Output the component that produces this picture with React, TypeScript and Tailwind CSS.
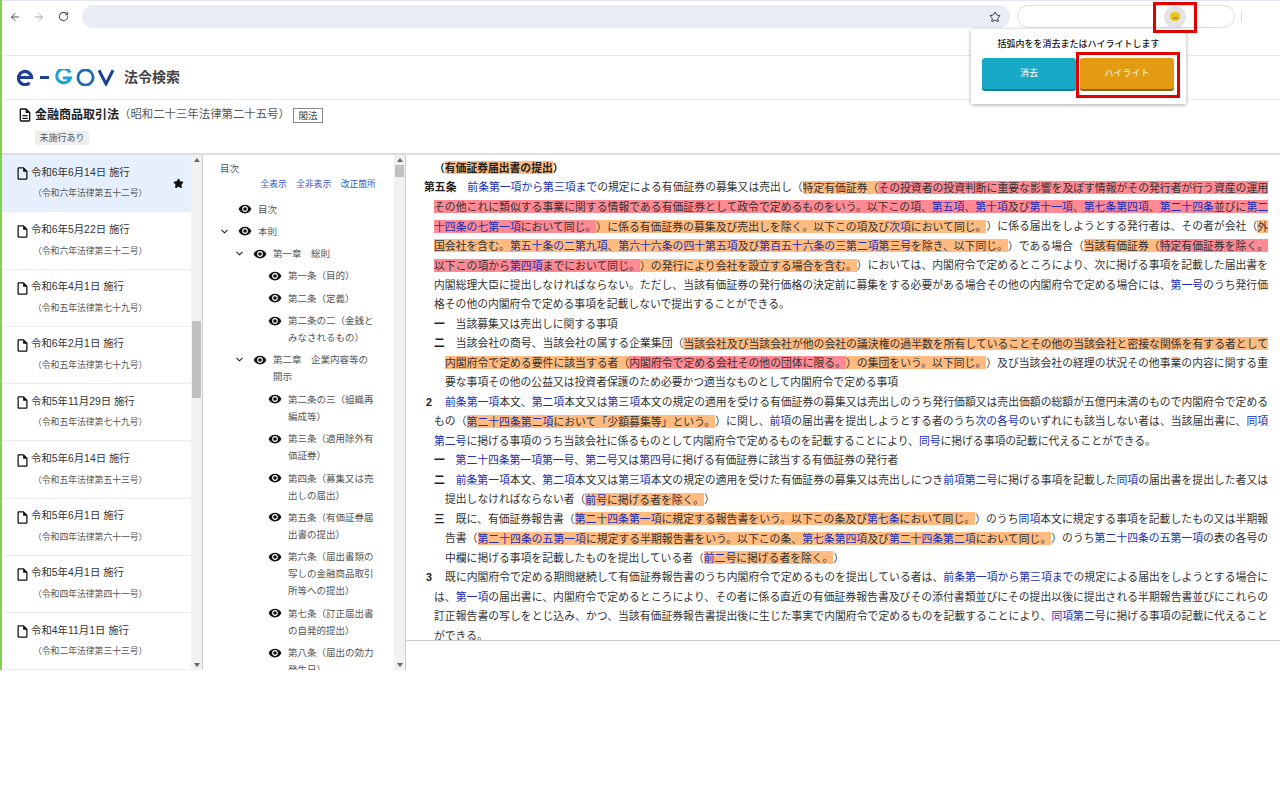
import React from "react";
import { ArrowLeft, ArrowRight, RotateCw, Star, ChevronDown } from "lucide-react";

type P = { children?: React.ReactNode };
const O = ({ children }: P) => <span className="bg-[#ffbb80] py-[0.5px]">{children}</span>;
const R = ({ children }: P) => <span className="bg-[#ff8a94] py-[0.5px]">{children}</span>;
const L = ({ children }: P) => <span className="text-[#2030b8]">{children}</span>;

function Line({ indent = 0, j = false, children }: P & { indent?: 0 | 1 | 2; j?: boolean }) {
  const ind = indent === 2 ? "ml-[21px]" : indent === 1 ? "ml-[10px]" : "";
  return (
    <div className={`h-[19.5px] leading-[19.5px] overflow-hidden ${ind} ${j ? "text-justify [text-align-last:justify]" : ""}`}>
      {children}
    </div>
  );
}

const FileIcon = ({ className }: { className: string }) => (
  <svg viewBox="0 0 24 24" fill="currentColor" className={className}>
    <path d="M14 2H6c-1.1 0-1.99.9-1.99 2L4 20c0 1.1.89 2 1.99 2H18c1.1 0 2-.9 2-2V8l-6-6zM6 20V4h7v5h5v11H6z" />
  </svg>
);
const DocIcon = ({ className }: { className: string }) => (
  <svg viewBox="0 0 24 24" fill="currentColor" className={className}>
    <path d="M8 16h8v2H8zm0-4h8v2H8zm6-10H6c-1.1 0-2 .9-2 2v16c0 1.1.89 2 1.99 2H18c1.1 0 2-.9 2-2V8l-6-6zm4 18H6V4h7v5h5v11z" />
  </svg>
);
const Eye = () => (
  <svg viewBox="0 0 24 24" fill="currentColor" className="w-[14px] h-[14px] shrink-0 -ml-[0.5px] mr-[6.5px] mt-[1.5px] text-[#111]">
    <path d="M12 4.5C7 4.5 2.73 7.61 1 12c1.73 4.39 6 7.5 11 7.5s9.27-3.11 11-7.5c-1.73-4.39-6-7.5-11-7.5zM12 17c-2.76 0-5-2.24-5-5s2.24-5 5-5 5 2.24 5 5-2.24 5-5 5zm0-8c-1.66 0-3 1.34-3 3s1.34 3 3 3 3-1.34 3-3-1.34-3-3-3z" />
  </svg>
);

const laws: [string, string][] = [
  ["令和6年6月14日 施行", "（令和六年法律第五十二号）"],
  ["令和6年5月22日 施行", "（令和六年法律第三十二号）"],
  ["令和6年4月1日 施行", "（令和五年法律第七十九号）"],
  ["令和6年2月1日 施行", "（令和五年法律第七十九号）"],
  ["令和5年11月29日 施行", "（令和五年法律第七十九号）"],
  ["令和5年6月14日 施行", "（令和五年法律第五十三号）"],
  ["令和5年6月1日 施行", "（令和四年法律第六十一号）"],
  ["令和5年4月1日 施行", "（令和四年法律第四十一号）"],
  ["令和4年11月1日 施行", "（令和二年法律第三十三号）"],
];

const toc: { level: 0 | 1 | 2; chev?: boolean; text: string }[] = [
  { level: 0, text: "目次" },
  { level: 0, chev: true, text: "本則" },
  { level: 1, chev: true, text: "第一章　総則" },
  { level: 2, text: "第一条（目的）" },
  { level: 2, text: "第二条（定義）" },
  { level: 2, text: "第二条の二（金銭とみなされるもの）" },
  { level: 1, chev: true, text: "第二章　企業内容等の開示" },
  { level: 2, text: "第二条の三（組織再編成等）" },
  { level: 2, text: "第三条（適用除外有価証券）" },
  { level: 2, text: "第四条（募集又は売出しの届出）" },
  { level: 2, text: "第五条（有価証券届出書の提出）" },
  { level: 2, text: "第六条（届出書類の写しの金融商品取引所等への提出）" },
  { level: 2, text: "第七条（訂正届出書の自発的提出）" },
  { level: 2, text: "第八条（届出の効力発生日）" },
];

function ScrollBar({ offset }: { offset: string }) {
  return (
    <div className="w-[11px] shrink-0 bg-[#f1f1f1] flex flex-col items-center h-full relative">
      <div className="mt-[3px] w-0 h-0 border-x-[3px] border-x-transparent border-b-[4px] border-b-[#666]" />
      <div className={`w-[9px] bg-[#c1c1c1] ${offset}`} />
      <div className="mt-auto mb-[3px] w-0 h-0 border-x-[3px] border-x-transparent border-t-[4px] border-t-[#666]" />
    </div>
  );
}

export default function App() {
  return (
    <div lang="ja" className="relative w-[1280px] h-[800px] bg-white overflow-hidden text-[#333] [text-spacing-trim:space-all] font-['Liberation_Sans','Noto_Sans_CJK_JP',sans-serif]">
      <div className="h-[670px] border-l-2 border-[#82d24f] flex flex-col">
        {/* browser toolbar */}
        <div className="h-px bg-[#e2e6f6]" />
        <div className="h-[55px] border-b border-[#e8e8e8] flex items-start pt-[4px] shrink-0">
          <div className="w-[1px]" />
          <div className="w-[24px] h-[23px] flex items-center justify-center text-[#555]"><ArrowLeft size={12} strokeWidth={2} /></div>
          <div className="w-[24px] h-[23px] flex items-center justify-center text-[#aaa]"><ArrowRight size={12} strokeWidth={2} /></div>
          <div className="w-[24px] h-[23px] flex items-center justify-center text-[#555]"><RotateCw size={11} strokeWidth={2.2} /></div>
          <div className="ml-[7px] w-[928px] h-[23px] rounded-full bg-[#e9eef6] flex items-center justify-end pr-[9px] text-[#333]">
            <Star size={12} strokeWidth={2} />
          </div>
          <div className="ml-[7px] w-[218px] h-[23px] rounded-full border border-[#dcdcdc] bg-white flex items-center justify-end pr-[48px]">
            <div className="w-[22px] h-[22px] rounded-full bg-[#e3e3e3] flex items-center justify-center">
              <div className="w-[10px] h-[9px] rounded-full bg-[#edc21f] flex items-center justify-center">
                <div className="w-[5px] h-[2px] mt-[2px] rounded-full bg-[#b8982f]" />
              </div>
            </div>
          </div>
          <div className="ml-[6px] mt-[7px] w-px h-[10px] bg-[#dcdcdc]" />
        </div>

        {/* site header */}
        <div className="h-[44px] shrink-0 border-b border-[#ececec] flex items-center pl-[15px] pb-[1px]">
          <svg viewBox="0 0 97 17" className="w-[97px] h-[17px]" fill="none">
            <path d="M1.8 8.5H14.6A6.6 6.6 0 1 0 12.6 13.8" stroke="#1c3f94" strokeWidth="3.2" />
            <path d="M23 8.5H32" stroke="#1c3f94" strokeWidth="3" />
            <path d="M53 3.6A7 7 0 1 0 53.4 9H46" stroke="#1ea0d8" strokeWidth="3" />
            <circle cx="68.5" cy="8.5" r="7.6" stroke="#1f6ab5" strokeWidth="2.8" />
            <path d="M82 1.2L89 15L96 1.2" stroke="#1c3f94" strokeWidth="3" />
          </svg>
          <span className="ml-[10px] text-[14px] font-bold leading-none text-[#444]">法令検索</span>
        </div>

        {/* title */}
        <div className="h-[53px] shrink-0 pl-[15px] pt-[7px]">
          <div className="flex items-center h-[16px]">
            <DocIcon className="w-[16px] h-[16px] text-[#111] shrink-0" />
            <span className="ml-[2px] text-[12px] font-bold text-[#222]">金融商品取引法</span>
            <span className="text-[11.4px] text-[#555]">（昭和二十三年法律第二十五号）</span>
            <span className="ml-[3px] w-[30px] h-[15px] border border-[#888] text-[9.5px] leading-[13px] text-center text-[#444]">閣法</span>
          </div>
          <div className="ml-[18px] mt-[8px] w-[54px] h-[14px] bg-[#eeeeee] text-[9px] leading-[14px] text-center text-[#555] rounded-[1px]">未施行あり</div>
        </div>

        {/* content */}
        <div className="flex-1 min-h-0 flex border-t-2 border-[#dddddd]">
          <div className="w-[189px] shrink-0 overflow-hidden">
            {laws.map(([a, b], i) => (
              <div key={i} className={`h-[57.25px] border-b border-[#ececec] flex items-center pr-[7px] ${i === 0 ? "bg-[#e6f0fc]" : ""}`}>
                <div className="flex-1 pl-[13px] -mt-[0.5px]">
                  <div className="flex items-center h-[18px] text-[10.4px] text-[#333]">
                    <FileIcon className="w-[15px] h-[15px] mt-[3px] shrink-0 text-[#111]" />
                    <span className="ml-[1px]">{a}</span>
                  </div>
                  <div className="mt-[4px] ml-[18px] h-[17px] leading-[17px] text-[8.8px] text-[#555] whitespace-nowrap">{b}</div>
                </div>
                {i === 0 && <Star size={11} fill="#111" stroke="#111" />}
              </div>
            ))}
          </div>
          <ScrollBar offset="mt-[159px] h-[77px]" />
          <div className="w-px bg-[#cccccc] shrink-0" />
          <div className="w-[191px] shrink-0 overflow-hidden text-[9.5px] text-[#555]">
            <div className="pl-[17px] pt-[5px] h-[22px] leading-[17px]">目次</div>
            <div className="-mt-px h-[17px] leading-[17px] flex gap-[9.5px] pl-[57.5px] text-[8.75px] text-[#3a55c4]">
              <span>全表示</span><span>全非表示</span><span>改正箇所</span>
            </div>
            <div className="pt-[5px] pl-[16px] pr-[18px]">
              {toc.map((t, i) => (
                <div key={i} className="flex items-start py-[2.6px] leading-[17.1px]">
                  {t.level === 1 && <div className="w-[15px] shrink-0" />}
                  {t.level === 2 && <div className="w-[30px] shrink-0" />}
                  <div className="w-[19px] shrink-0 pt-[3px]">
                    {t.chev && <ChevronDown size={11} strokeWidth={2.2} className="text-[#222]" />}
                  </div>
                  <Eye />
                  <span className="min-w-0">{t.text}</span>
                </div>
              ))}
            </div>
          </div>
          <ScrollBar offset="mt-[3px] h-[12px]" />
          <div className="w-px bg-[#cccccc] shrink-0" />

          {/* law text */}
          <div className="flex-1 min-w-0">
            <div className="h-[486px] border-b border-[#cccccc] overflow-hidden pl-[18px] pr-[12px] pt-[3.5px] text-[10.8px] text-[#333]">
              <Line indent={1}><b className="text-[#222]">（<O>有価証券届出書の提出</O>）</b></Line>
              <Line j><b className="text-[#222]">第五条</b>　<L>前条第一項から第三項まで</L>の規定による有価証券の募集又は売出し（<O>特定有価証券（</O><R>その投資者の投資判断に重要な影響を及ぼす情報がその発行者が行う資産の運用</R></Line>
              <Line indent={1} j><R>その他これに類似する事業に関する情報である有価証券として政令で定めるものをいう。以下この項、<L>第五項</L>、<L>第十項</L>及び<L>第十一項</L>、<L>第七条第四項</L>、<L>第二十四条</L>並びに<L>第二</L></R></Line>
              <Line indent={1} j><R><L>十四条の七第一項</L>において同じ。</R><O>）に係る有価証券の募集及び売出しを除く。以下この項及び<L>次項</L>において同じ。</O>）に係る届出をしようとする発行者は、その者が会社（<O>外</O></Line>
              <Line indent={1} j><O>国会社を含む。<L>第五十条の二第九項</L>、<L>第六十六条の四十第五項</L>及び<L>第百五十六条の三第二項第三号</L>を除き、以下同じ。</O>）である場合（<O>当該有価証券（</O><R>特定有価証券を除く。</R></Line>
              <Line indent={1} j><R>以下この項から<L>第四項</L>までにおいて同じ。</R><O>）の発行により会社を設立する場合を含む。</O>）においては、内閣府令で定めるところにより、次に掲げる事項を記載した届出書を</Line>
              <Line indent={1} j>内閣総理大臣に提出しなければならない。ただし、当該有価証券の発行価格の決定前に募集をする必要がある場合その他の内閣府令で定める場合には、<L>第一号</L>のうち発行価</Line>
              <Line indent={1}>格その他の内閣府令で定める事項を記載しないで提出することができる。</Line>
              <Line indent={1}><b className="text-[#222]">一</b>　当該募集又は売出しに関する事項</Line>
              <Line indent={1} j><b className="text-[#222]">二</b>　当該会社の商号、当該会社の属する企業集団（<O>当該会社及び当該会社が他の会社の議決権の過半数を所有していることその他の当該会社と密接な関係を有する者として</O></Line>
              <Line indent={2} j><O>内閣府令で定める要件に該当する者（</O><R>内閣府令で定める会社その他の団体に限る。</R><O>）の集団をいう。以下同じ。</O>）及び当該会社の経理の状況その他事業の内容に関する重</Line>
              <Line indent={2}>要な事項その他の公益又は投資者保護のため必要かつ適当なものとして内閣府令で定める事項</Line>
              <Line j><b className="inline-block w-[21px] pl-[2px] text-[#222]">2</b><L>前条第一項</L>本文、<L>第二項</L>本文又は<L>第三項</L>本文の規定の適用を受ける有価証券の募集又は売出しのうち発行価額又は売出価額の総額が五億円未満のもので内閣府令で定める</Line>
              <Line indent={1} j>もの（<O><L>第二十四条第二項</L>において「少額募集等」という。</O>）に関し、<L>前項</L>の届出書を提出しようとする者のうち<L>次の各号</L>のいずれにも該当しない者は、当該届出書に、<L>同項</L></Line>
              <Line indent={1}><L>第二号</L>に掲げる事項のうち当該会社に係るものとして内閣府令で定めるものを記載することにより、<L>同号</L>に掲げる事項の記載に代えることができる。</Line>
              <Line indent={1}><b className="text-[#222]">一</b>　<L>第二十四条第一項第一号</L>、<L>第二号</L>又は<L>第四号</L>に掲げる有価証券に該当する有価証券の発行者</Line>
              <Line indent={1} j><b className="text-[#222]">二</b>　<L>前条第一項</L>本文、<L>第二項</L>本文又は<L>第三項</L>本文の規定の適用を受けた有価証券の募集又は売出しにつき<L>前項第二号</L>に掲げる事項を記載した<L>同項</L>の届出書を提出した者又は</Line>
              <Line indent={2}>提出しなければならない者（<O><L>前号</L>に掲げる者を除く。</O>）</Line>
              <Line indent={1} j><b className="text-[#222]">三</b>　既に、有価証券報告書（<O><L>第二十四条第一項</L>に規定する報告書をいう。以下この条及び<L>第七条</L>において同じ。</O>）のうち<L>同項</L>本文に規定する事項を記載したもの又は半期報</Line>
              <Line indent={2} j>告書（<O><L>第二十四条の五第一項</L>に規定する半期報告書をいう。以下この条、<L>第七条第四項</L>及び<L>第二十四条第二項</L>において同じ。</O>）のうち<L>第二十四条の五第一項</L>の表の各号の</Line>
              <Line indent={2}>中欄に掲げる事項を記載したものを提出している者（<O><L>前二号</L>に掲げる者を除く。</O>）</Line>
              <Line j><b className="inline-block w-[21px] pl-[2px] text-[#222]">3</b>既に内閣府令で定める期間継続して有価証券報告書のうち内閣府令で定めるものを提出している者は、<L>前条第一項から第三項まで</L>の規定による届出をしようとする場合に</Line>
              <Line indent={1} j>は、<L>第一項</L>の届出書に、内閣府令で定めるところにより、その者に係る直近の有価証券報告書及びその添付書類並びにその提出以後に提出される半期報告書並びにこれらの</Line>
              <Line indent={1} j>訂正報告書の写しをとじ込み、かつ、当該有価証券報告書提出後に生じた事実で内閣府令で定めるものを記載することにより、<L>同項第二号</L>に掲げる事項の記載に代えること</Line>
              <Line indent={1}>ができる。</Line>
            </div>
          </div>
        </div>
      </div>

      {/* extension popup */}
      <div className="absolute left-[971px] top-[29px] w-[215px] h-[75px] bg-white shadow-[0_1px_4px_rgba(0,0,0,0.35)] flex flex-col">
        <div className="h-[29px] pt-[6px] leading-[18px] text-center text-[9px] font-medium text-[#111]">括弧内をを消去またはハイライトします</div>
        <div className="flex gap-[4px] pl-[11px]">
          <div className="w-[94px] h-[33px] rounded-[3px] bg-[#17a9c6] border-b-2 border-[#0f7f96] text-white text-[9px] flex items-center justify-center">消去</div>
          <div className="w-[94px] h-[33px] rounded-[3px] bg-[#e39b13] border-b-2 border-[#8f6410] text-white text-[9px] flex items-center justify-center">ハイライト</div>
        </div>
      </div>

      {/* red annotation frames */}
      <div className="absolute left-[1153px] top-[2px] w-[44px] h-[31px] border-[3px] border-[#e00000]" />
      <div className="absolute left-[1076px] top-[52px] w-[104px] h-[46px] border-[3px] border-[#e00000]" />
    </div>
  );
}
